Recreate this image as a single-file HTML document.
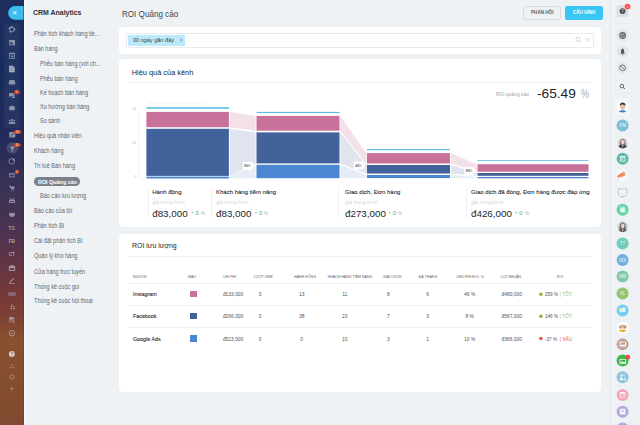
<!DOCTYPE html>
<html><head><meta charset="utf-8">
<style>
*{box-sizing:border-box;margin:0;padding:0}
html,body{width:640px;height:425px;overflow:hidden;background:#eef2f5;font-family:"Liberation Sans",sans-serif;position:relative}
.abs{position:absolute}
.t{position:absolute;white-space:nowrap;line-height:1}
#lsb{left:0;top:0;width:23.5px;height:425px;background:linear-gradient(180deg,#1e2f5f 0%,#172c5e 16.7%,#232b5a 33%,#393256 43.8%,#4b3350 54.4%,#613545 61.4%,#743838 68.5%,#7c3f35 73.6%,#8a502e 80.2%,#7f4a30 100%)}
#lsbline{left:23.5px;top:0;width:1px;height:425px;background:#f5f9fb}
#nav{left:24.5px;top:0;width:88px;height:425px;background:#eef2f5}
.nv{position:absolute;white-space:nowrap;line-height:1;font-size:6.4px;color:#60656f;transform:translateY(-50%) scaleX(0.865);transform-origin:0 50%}
#rsb{left:610px;top:0;width:30px;height:425px;background:#eef2f5;border-left:1px solid #e6e9ed}
.card{position:absolute;background:#fff;border-radius:4.5px}
</style></head><body>
<div id="lsb" class="abs"></div>
<div id="lsbline" class="abs"></div>
<div class="abs" style="left:22.5px;top:0;width:1px;height:425px;background:rgba(0,0,0,0.1)"></div>
<div id="nav" class="abs"></div>
<div id="rsb" class="abs"></div>


<!-- left sidebar icons -->
<svg class="abs" style="left:0;top:0" width="24" height="425">
<path d="M15,6.1 H23.5 V19.7 H15 A6.8,6.8 0 0 1 15,6.1Z" fill="#3dbdf0"/>
<path d="M13.5,11.3 L16.3,14.1 M16.3,11.3 L13.5,14.1" stroke="#fff" stroke-width="1" stroke-linecap="round"/>
<rect x="4.2" y="23.2" width="15.6" height="104.8" rx="2.2" fill="#ffffff" fill-opacity="0.045"/>
<g fill="none" stroke="#c9ccd9" stroke-width="0.9" stroke-opacity="0.6">
 <!-- 1 cycle -->
 <circle cx="12" cy="29.5" r="2.4"/>
 <!-- 4 doc -->
 <path d="M9.5,66 H12.6 L14.3,67.7 V72 H9.5Z" fill="#c9ccd9" fill-opacity="0.7"/>
 <!-- 11 gauge -->
 <circle cx="11.8" cy="161.3" r="2.8"/>
 <!-- circle minus -->
 <circle cx="11.8" cy="333.3" r="2.7" stroke-width="1"/>
 <!-- gear -->
 <circle cx="11.8" cy="377" r="2.2" stroke-opacity="0.5"/>
</g>
<g fill="#c9ccd9" fill-opacity="0.62">
 <circle cx="9.6" cy="28.2" r="0.9"/><circle cx="14.4" cy="29.5" r="0.9"/><circle cx="10.5" cy="31.7" r="0.9"/><circle cx="11.8" cy="27" r="0.9"/>
 <!-- 2 monitor -->
 <path d="M9.2,40 H15 V45.2 H9.2Z M10,42.4 V44.2 H12.6 V42.4Z" fill-rule="evenodd"/>
 <!-- 3 calendar -->
 <path d="M9.1,52.7 H14.9 V58.8 H9.1Z M9.9,54.3 V58 H14.1 V54.3Z" fill-rule="evenodd"/>
 <rect x="11.2" y="55.4" width="2.2" height="1.8"/>
 <!-- 5 tray -->
 <path d="M9.6,80 H14.4 L15.2,82.3 V84.6 H8.8 V82.3Z"/>
 <!-- 6 chat -->
 <path d="M9,93 H13.6 V96.3 H10.6 L9.6,97.4 V96.3 H9Z"/>
 <path d="M14.2,94.6 V97.5 H11.8" fill="none" stroke="#c9ccd9" stroke-width="0.7"/>
 <!-- 7 mail -->
 <path d="M9.2,106.8 L12,105.4 L14.8,106.8 V110.3 H9.2Z"/>
 <!-- 8 people -->
 <circle cx="12" cy="120" r="1.1"/><circle cx="9.6" cy="120.6" r="0.9"/><circle cx="14.4" cy="120.6" r="0.9"/>
 <path d="M8.2,124 Q9.5,121.5 12,121.6 Q14.5,121.5 15.8,124Z"/>
 <!-- 9 check square -->
 <rect x="9.2" y="132" width="6" height="5.6" rx="0.6"/>
 <path d="M10.6,136.4 L13.8,133.2" stroke="#2a3166" stroke-width="0.8"/>
</g>
<!-- funnel highlight -->
<circle cx="12.3" cy="147.9" r="5.7" fill="#ffffff" fill-opacity="0.15"/>
<g fill="#c9ccd9" fill-opacity="0.62">
 <path d="M9.6,146.4 H15 L13,149 V151.4 H11.6 V149Z"/>
 <path d="M12.5,159.8 L14.6,158.4 L13.6,161" fill-opacity="0.8"/>
 <!-- card -->
 <path d="M9,173.2 H14.6 V177.2 H9Z M9.8,174.5 V176.4 H13.8 V174.5Z" fill-rule="evenodd"/>
 <!-- cart -->
 <path d="M9,185.4 H10.4 L10.9,186.4 H14.8 L14,189.3 H11.2Z"/>
 <circle cx="11.4" cy="190.6" r="0.6"/><circle cx="13.6" cy="190.6" r="0.6"/>
 <!-- android -->
 <path d="M9,201 Q9,199.2 12,199.2 Q15,199.2 15,201 V203 H9Z M10,201.2 V202.2 H14 V201.2Z" fill-rule="evenodd"/>
 <path d="M10,198 L10.8,199.4 M14,198 L13.2,199.4" stroke="#c9ccd9" stroke-width="0.6"/>
 <!-- mask -->
 <path d="M9.2,212.6 L10.6,213.6 L12,212.6 L13.4,213.6 L14.8,212.6 V215.2 Q14.5,217 12,217 Q9.5,217 9.2,215.2Z"/>
 <!-- bank -->
 <path d="M8.8,266.3 L12,265 L15.2,266.3 V271 H8.8Z M9.8,268.2 V270 H14.2 V268.2Z" fill-rule="evenodd"/>
 <!-- pen -->
 <path d="M9.2,283 H14.8 V283.8 H9.2Z"/>
 <path d="M9.4,282.6 L13.8,278.4" stroke="#c9ccd9" stroke-width="0.9"/>
 <!-- Js -->
 <path d="M12.2,304.2 V308.4 Q12.2,309.2 11,309.2 H9.8 V308.4 H11.2 V304.2Z"/>
 <path d="M13,308 H15 V309.2 H13Z M13,306 H14.6 V307 H13Z"/>
 <!-- flag/pdf -->
 <path d="M9.4,317 H13 L14.2,318.2 V319.6 H10.6 V322.6 H9.4Z"/>
 <path d="M11.6,320.4 L14.4,322.8 M14.4,320.4 L12.8,321.6" stroke="#c9ccd9" stroke-width="0.7"/>
 <!-- minus inside circle -->
 <path d="M10.6,333 H13 L11.8,334.2Z"/>
 <!-- divider -->
 <rect x="9" y="344" width="6" height="0.5" fill-opacity="0.15"/>
 <!-- question -->
 <circle cx="11.8" cy="354" r="2.9" fill="#d8dce4" fill-opacity="0.9"/>
 <!-- network -->
 <circle cx="11.8" cy="365.3" r="0.7" fill-opacity="0.55"/><circle cx="10.4" cy="367.5" r="0.7" fill-opacity="0.55"/><circle cx="13.2" cy="367.5" r="0.7" fill-opacity="0.55"/>
 <!-- plus -->
 <path d="M11.4,386.6 H12.2 V388.2 H13.8 V389 H12.2 V390.6 H11.4 V389 H9.8 V388.2 H11.4Z" fill-opacity="0.5"/>
</g>
<path d="M11.1,353 Q11.1,352.3 11.9,352.3 Q12.7,352.3 12.7,353 Q12.7,353.6 11.9,353.9 V354.6 M11.9,355.2 V355.7" stroke="#8a502e" stroke-width="0.6" fill="none"/>
<g fill="#c9461f">
 <ellipse cx="16.8" cy="92.2" rx="3" ry="2.1"/>
 <ellipse cx="17.45" cy="132" rx="4" ry="2.1"/>
 <ellipse cx="17.1" cy="145.1" rx="3.7" ry="2.1"/>
 <ellipse cx="17" cy="172" rx="2.4" ry="2"/>
</g>
<g fill="#fff" font-family="Liberation Sans" font-size="2.6" text-anchor="middle">
 <text x="16.8" y="93.1">5</text>
 <text x="17.45" y="132.9">23</text>
 <text x="17.1" y="146">16</text>
 <text x="17" y="172.9">2</text>
</g>
<g fill="#c9ccd9" fill-opacity="0.72" font-family="Liberation Sans" font-size="5.2" font-weight="700" text-anchor="middle">
 <text x="11.8" y="230" textLength="6.4" lengthAdjust="spacingAndGlyphs">TG</text>
 <text x="11.8" y="243.2" textLength="6.2" lengthAdjust="spacingAndGlyphs">FB</text>
 <text x="11.8" y="256.4" textLength="6.2" lengthAdjust="spacingAndGlyphs">CT</text>
 <text x="12" y="295.6" font-size="4.6" font-weight="400" fill-opacity="0.75" textLength="7.4" lengthAdjust="spacingAndGlyphs">MM</text>
</g>
</svg>

<!-- right sidebar -->
<svg class="abs" style="left:0;top:0" width="640" height="425">
<rect x="616.6" y="5.2" width="11.7" height="11.7" rx="1.8" fill="#dcdfe4"/>
<circle cx="622.6" cy="11.1" r="2.9" fill="#4a4f5a"/>
<path d="M621.8,10.2 Q621.8,9.3 622.6,9.3 Q623.4,9.3 623.4,10.1 Q623.4,10.7 622.6,11 V11.8 M622.6,12.4 V12.9" stroke="#dfe2e7" stroke-width="0.55" fill="none"/>
<circle cx="627.5" cy="6.6" r="3.2" fill="#f04848" stroke="#fff" stroke-width="0.6"/>
<text x="627.5" y="7.6" font-family="Liberation Sans" font-size="2.8" fill="#fff" text-anchor="middle">6</text>
<rect x="615" y="23" width="15" height="0.5" fill="#e2e5e9"/>
<rect x="615" y="79.7" width="15" height="0.5" fill="#e2e5e9"/>
<rect x="615" y="93" width="15" height="0.5" fill="#e2e5e9"/>
<circle cx="622.6" cy="35.5" r="5.9" fill="#e3e6ea"/>
<circle cx="622.6" cy="51.3" r="5.9" fill="#e3e6ea"/>
<circle cx="622.6" cy="67.8" r="5.9" fill="#e3e6ea"/>
<circle cx="622.6" cy="35.5" r="3.4" fill="#666b75"/>
<circle cx="622.9" cy="35.8" r="1.5" fill="none" stroke="#b9bdc4" stroke-width="0.6"/>
<path d="M619.6,34.6 Q621.5,33.4 623.8,34.2 M621,38.2 Q620.2,36.4 621.4,35" stroke="#b9bdc4" stroke-width="0.5" fill="none"/>
<path d="M620.4,53.4 Q621.2,52.6 621.2,50.6 Q621.2,48.6 622.6,48.4 Q624,48.6 624,50.6 Q624,52.6 624.8,53.4Z" fill="#4d525c"/>
<circle cx="622.6" cy="54.2" r="0.7" fill="#4d525c"/>
<circle cx="622.6" cy="67.8" r="2.9" fill="none" stroke="#5a5f6a" stroke-width="0.8"/>
<path d="M620.6,65.8 L624.6,69.8" stroke="#5a5f6a" stroke-width="0.8"/>
<circle cx="621.9" cy="86.1" r="1.8" fill="none" stroke="#3f444d" stroke-width="0.8"/>
<path d="M623.2,87.4 L624.8,89" stroke="#3f444d" stroke-width="0.9"/>
<rect x="615" y="98.5" width="15" height="17" rx="2" fill="#f3f5f7"/>
<circle cx="622.6" cy="106.7" r="5.6" fill="#fff"/>
<path d="M618.8,111.5 Q622.6,108.8 626.4,111.5 Q622.6,113.4 618.8,111.5Z" fill="#3a82c4"/>
<ellipse cx="622.6" cy="107" rx="2.4" ry="3" fill="#e8c0a8"/>
<path d="M619.8,106 Q619.6,102.6 622.8,102.6 Q625.8,102.8 625.6,106 Q624.6,104.2 622.2,104.4 Q620.6,104.8 619.8,106Z" fill="#3a3a3a"/>
<circle cx="622.6" cy="125.4" r="6" fill="#7cbfd6"/>
<text x="622.6" y="127.0" font-family="Liberation Sans" font-size="4.6" fill="#fff" fill-opacity="0.9" text-anchor="middle">PM</text>
<circle cx="622.6" cy="158.8" r="6" fill="#5bbcac"/>
<circle cx="622.6" cy="209.7" r="6" fill="#62d6a2"/>
<circle cx="622.6" cy="243.5" r="6" fill="#72cdb8"/>
<text x="622.6" y="245.1" font-family="Liberation Sans" font-size="4.6" fill="#fff" fill-opacity="0.9" text-anchor="middle">TT</text>
<circle cx="622.6" cy="260.1" r="6" fill="#70b2dd"/>
<text x="622.6" y="261.70000000000005" font-family="Liberation Sans" font-size="4.6" fill="#fff" fill-opacity="0.9" text-anchor="middle">MX</text>
<circle cx="622.6" cy="276.5" r="6" fill="#80c8a8"/>
<text x="622.6" y="278.1" font-family="Liberation Sans" font-size="4.6" fill="#fff" fill-opacity="0.9" text-anchor="middle">MB</text>
<circle cx="622.6" cy="293.4" r="6" fill="#95c56e"/>
<text x="622.6" y="295.0" font-family="Liberation Sans" font-size="4.6" fill="#fff" fill-opacity="0.9" text-anchor="middle">XL</text>
<circle cx="622.6" cy="310.4" r="6" fill="#72cff2"/>
<circle cx="622.6" cy="344.3" r="6" fill="#c4a698"/>
<circle cx="622.6" cy="360.6" r="6" fill="#3dba47"/>
<circle cx="622.6" cy="377.2" r="6" fill="#8ec3dc"/>
<circle cx="622.6" cy="394.9" r="6" fill="#f2a5b9"/>
<circle cx="622.6" cy="411.7" r="6" fill="#b3a7e0"/>
<circle cx="622.6" cy="428.5" r="6" fill="#b3a7e0"/>
<rect x="619.8" y="156" width="5.6" height="5.4" rx="0.5" fill="#fff" fill-opacity="0.85"/><rect x="620.6" y="157.6" width="4" height="3" fill="#5bbcac"/><rect x="621.4" y="158.4" width="1.6" height="1.4" fill="#fff" fill-opacity="0.8"/>
<rect x="620.2" y="206.8" width="4.4" height="5.6" fill="#fff" fill-opacity="0.85"/><rect x="624.6" y="208" width="0.9" height="4.4" fill="#fff" fill-opacity="0.7"/><circle cx="621.2" cy="207.8" r="0.5" fill="#5aa8e0"/><circle cx="622.6" cy="207.8" r="0.5" fill="#5aa8e0"/>
<path d="M619.4,307.8 H625.4 V311.8 H621.4 L620.2,313 V311.8 H619.4Z" fill="#fff" fill-opacity="0.85"/><rect x="620" y="308.4" width="2.4" height="1.4" fill="#c8e070"/>
<rect x="619.6" y="341.7" width="6.4" height="4.8" rx="0.6" fill="#fff" fill-opacity="0.9"/><rect x="620.6" y="342.6" width="1.2" height="2.4" fill="#a88a7e"/><rect x="622.4" y="342.6" width="2.6" height="2" fill="#a88a7e"/>
<rect x="619.6" y="358.9" width="6.4" height="4.8" rx="0.6" fill="#fff" fill-opacity="0.9"/><rect x="620.6" y="359.8" width="1.2" height="2.4" fill="#2f9a3a"/><rect x="622.4" y="359.8" width="2.6" height="2" fill="#2f9a3a"/>
<circle cx="627.8" cy="357.2" r="2.4" fill="#ee4a4a"/>
<path d="M619.4,380.2 Q619.6,377.6 621.4,377.4 Q623.2,377.6 623.4,380.2Z M620.4,375.6 a1,1.3 0 1 0 2,0 a1,1.3 0 1 0 -2,0" fill="#fff" fill-opacity="0.9"/><path d="M623.8,380.2 H625.8 Q625.6,377.8 624.2,377.4 M624,373.8 V376.2" stroke="#fff" stroke-width="0.8" fill="none"/>
<rect x="619.8" y="392" width="5.6" height="5.6" rx="0.6" fill="#fff" fill-opacity="0.85"/><rect x="620.6" y="393.8" width="4" height="3" fill="#f2a5b9"/><rect x="621.2" y="394.6" width="2.8" height="0.6" fill="#fff" fill-opacity="0.8"/>
<rect x="619.8" y="408.8" width="5.6" height="5.6" rx="0.6" fill="#fff" fill-opacity="0.85"/><path d="M621.2,410.4 H624 L622.6,412.4Z" fill="#b3a7e0"/>
<circle cx="622.7" cy="142.9" r="6.2" fill="#f7f8fa"/>
<clipPath id="av142"><circle cx="622.7" cy="142.9" r="5.5"/></clipPath>
<g clip-path="url(#av142)">
<rect x="616.7" y="136.9" width="12" height="12" fill="#dcdee2"/>
<path d="M619.5,145.9 Q619.3000000000001,138.70000000000002 622.7,138.70000000000002 Q626.1,138.70000000000002 625.7,145.9Z" fill="#8c746a"/>
<ellipse cx="622.8000000000001" cy="142.1" rx="1.8" ry="2.4" fill="#ead3ca"/>
<path d="M616.7,148.9 Q617.7,144.9 622.7,145.1 Q627.7,144.9 628.7,148.9Z" fill="#3f434b"/>
<path d="M622.1,144.9 L623.3000000000001,144.9 L622.9000000000001,148.4 Z" fill="#e8d2c8"/>
</g>
<circle cx="622.7" cy="226.7" r="6.2" fill="#f7f8fa"/>
<clipPath id="av226"><circle cx="622.7" cy="226.7" r="5.5"/></clipPath>
<g clip-path="url(#av226)">
<rect x="616.7" y="220.7" width="12" height="12" fill="#cdd1d8"/>
<path d="M619.5,229.7 Q619.3000000000001,222.5 622.7,222.5 Q626.1,222.5 625.7,229.7Z" fill="#6e5e58"/>
<ellipse cx="622.8000000000001" cy="225.89999999999998" rx="1.8" ry="2.4" fill="#ead3ca"/>
<path d="M616.7,232.7 Q617.7,228.7 622.7,228.89999999999998 Q627.7,228.7 628.7,232.7Z" fill="#5d6473"/>
<path d="M622.1,228.7 L623.3000000000001,228.7 L622.9000000000001,232.2 Z" fill="#e8d2c8"/>
</g>
<circle cx="622.6" cy="175.8" r="6" fill="#fafafa"/>
<path d="M617.2,176.8 Q617,175.6 618.2,175 L623.4,171.6 L624.8,176 L618.6,177.6 Q617.6,177.8 617.2,176.8Z" fill="#f08a5a"/><ellipse cx="624.2" cy="173.8" rx="1.2" ry="2.4" fill="#e7b486" transform="rotate(-18 624.2 173.8)"/><circle cx="618.6" cy="178.6" r="0.6" fill="#f5c0a8"/>
<circle cx="622.6" cy="192.7" r="6" fill="#f4f6f8"/>
<path d="M618.2,192.8 Q618.2,189.6 619,188.4 L620.6,189.2 Q622.6,188.6 624.6,189.2 L626.2,188.4 Q627,189.6 627,192.8 Q627,196.6 622.6,196.8 Q618.2,196.6 618.2,192.8Z" fill="none" stroke="#8f949c" stroke-width="0.55"/><path d="M620.4,192.6 L621.4,193.4 M624.8,192.6 L623.8,193.4 M622,194.6 H623.2" stroke="#8f949c" stroke-width="0.45"/><path d="M621.8,197.2 L622.6,198 L623.4,197.2" stroke="#8f949c" stroke-width="0.4" fill="none"/>
<circle cx="622.6" cy="327.9" r="6" fill="#fff"/>
<path d="M618.4,330.4 Q622.6,328.6 626.8,330.4 Q622.6,334 618.4,330.4Z" fill="#e2b83a"/>
<circle cx="620.4" cy="327" r="1.7" fill="#caa080"/><circle cx="624.8" cy="327" r="1.7" fill="#b08a70"/><circle cx="622.6" cy="326.4" r="2" fill="#d8b090"/>
</svg>

<!-- nav -->
<div class="t" style="left:33.3px;top:12.9px;font-size:8px;font-weight:700;color:#2e3035;transform:translateY(-50%) scaleX(0.87);transform-origin:0 50%">CRM Analytics</div>
<div class="nv" style="left:34px;top:33.7px">Phân tích khách hàng tiề...</div>
<div class="nv" style="left:34px;top:49.2px">Bán hàng</div>
<div class="nv" style="left:40px;top:64.1px">Phễu bán hàng (với ch...</div>
<div class="nv" style="left:40px;top:78.8px">Phễu bán hàng</div>
<div class="nv" style="left:40px;top:93.1px">Kế hoạch bán hàng</div>
<div class="nv" style="left:40px;top:107.1px">Xu hướng bán hàng</div>
<div class="nv" style="left:40px;top:121.4px">So sánh</div>
<div class="nv" style="left:34px;top:135.9px">Hiệu quả nhân viên</div>
<div class="nv" style="left:34px;top:151.3px">Khách hàng</div>
<div class="nv" style="left:34px;top:166.4px">Trí tuệ Bán hàng</div>
<div class="abs" style="left:33.8px;top:177.1px;width:46.3px;height:9.2px;border-radius:5px;background:#7b808b"></div>
<div class="nv" style="left:38.1px;top:181.8px;color:#fff;font-weight:700;font-size:6px;transform:translateY(-50%) scaleX(0.9)">ROI Quảng cáo</div>
<div class="nv" style="left:40px;top:196.1px">Báo cáo lưu lượng</div>
<div class="nv" style="left:34px;top:210.6px">Báo cáo của tôi</div>
<div class="nv" style="left:34px;top:225.6px">Phân tích BI</div>
<div class="nv" style="left:34px;top:240.9px">Cài đặt phân tích BI</div>
<div class="nv" style="left:34px;top:256.4px">Quản lý kho hàng</div>
<div class="nv" style="left:34px;top:271.9px">Cửa hàng trực tuyến</div>
<div class="nv" style="left:34px;top:287px">Thống kê cuộc gọi</div>
<div class="nv" style="left:34px;top:301.4px">Thống kê cuộc hội thoại</div>

<!-- header -->
<div class="t" style="left:121.7px;top:14.25px;font-size:8.4px;color:#3d4047;transform:translateY(-50%) scaleX(0.965);transform-origin:0 50%">ROI Quảng cáo</div>

<!-- filter card -->
<div class="card" style="left:119px;top:27px;width:482px;height:27px"></div>

<!-- chart card -->
<div class="card" style="left:119px;top:59.4px;width:481.8px;height:167.6px"></div>


<!-- header buttons -->
<div class="abs" style="left:523.2px;top:5.9px;width:37.4px;height:14.4px;border:1px solid #d9dce1;border-radius:2px;background:#eef2f5"></div>
<div class="t" style="left:531px;top:13.4px;font-size:4.6px;font-weight:700;color:#5a5e66;transform:translateY(-50%)">PHẢN HỒI</div>
<div class="abs" style="left:565px;top:5.9px;width:37.9px;height:14.6px;border-radius:2px;background:#3ac6f4"></div>
<div class="t" style="left:572.9px;top:13.4px;font-size:4.6px;font-weight:700;color:#fff;transform:translateY(-50%)">CẤU HÌNH</div>

<!-- filter content -->
<div class="abs" style="left:125.6px;top:33.2px;width:468.5px;height:14.5px;border:1px solid #e8eaee;border-radius:2px"></div>
<div class="abs" style="left:128px;top:35px;width:57px;height:11px;background:#bceafa"></div>
<div class="t" style="left:132.7px;top:40.6px;font-size:5.6px;color:#3a3f47;transform:translateY(-50%)">30 ngày gần đây</div>
<div class="t" style="left:179.8px;top:40.6px;font-size:5.5px;color:#7d8c95;transform:translateY(-50%)">×</div>
<svg class="abs" style="left:0;top:0" width="640" height="425">
<circle cx="577.9" cy="39.3" r="1.9" fill="none" stroke="#c4c7cc" stroke-width="0.8"/>
<line x1="579.3" y1="40.7" x2="580.6" y2="42" stroke="#c4c7cc" stroke-width="0.9"/>
<line x1="585.6" y1="38" x2="589.2" y2="41.6" stroke="#c4c7cc" stroke-width="0.7"/>
<line x1="589.2" y1="38" x2="585.6" y2="41.6" stroke="#c4c7cc" stroke-width="0.7"/>
</svg>

<!-- chart card content -->
<div class="t" style="left:131.7px;top:72.5px;font-size:7.4px;color:#202328;transform:translateY(-50%)">Hiệu quả của kênh</div>
<div class="abs" style="left:128px;top:82px;width:464px;height:0.6px;background:#eef0f3"></div>
<div class="t" style="left:496px;top:94.8px;font-size:4.9px;color:#9a9ea5;transform:translateY(-50%)">ROI quảng cáo</div>
<div class="t" style="left:537.2px;top:93.9px;font-size:13.1px;color:#1f2226;transform:translateY(-50%) scaleX(1.045);transform-origin:0 50%">-65.49</div>
<div class="t" style="left:580.7px;top:93.9px;font-size:12.6px;color:#a9adb3;transform:translateY(-50%) scaleX(0.72);transform-origin:0 50%">%</div>

<svg class="abs" style="left:0;top:0" width="640" height="425">
<line x1="138.7" y1="107" x2="138.7" y2="178.5" stroke="#eceef1" stroke-width="0.6"/>
<line x1="138.7" y1="178.5" x2="145" y2="178.5" stroke="#eceef1" stroke-width="0.6"/>
<line x1="147" y1="102.8" x2="204" y2="102.8" stroke="#d4d7dc" stroke-width="0.7" stroke-dasharray="0.8 1.2"/>
<polygon points="229.8,111.9 255.6,115.9 255.6,130.7 229.8,127.2" fill="#f4e0e8"/>
<polygon points="229.8,128.8 255.6,132.4 255.6,163.4 229.8,175.9" fill="#dfe4ee"/>
<polygon points="229.8,176.6 255.6,164.8 255.6,178.2 229.8,178.5" fill="#e6edf7"/>
<polygon points="340.4,115.9 366.0,153.1 366.0,163.5 340.4,130.7" fill="#f4e0e8"/>
<polygon points="340.4,132.4 366.0,165.0 366.0,173.5 340.4,163.4" fill="#dfe4ee"/>
<polygon points="340.4,164.8 366.0,175.0 366.0,178.1 340.4,178.2" fill="#e6edf7"/>
<polygon points="450.9,153.1 476.6,164.25 476.6,171.75 450.9,163.5" fill="#f4e0e8"/>
<polygon points="450.9,165.0 476.6,173.0 476.6,175.8 450.9,173.5" fill="#dfe4ee"/>
<polygon points="450.9,175.0 476.6,177.0 476.6,178.3 450.9,178.1" fill="#e6edf7"/>
<rect x="146.4" y="107.2" width="82.5" height="1.6" fill="#5bbde3"/>
<rect x="146.4" y="111.9" width="82.5" height="15.3" fill="#c8719a"/>
<rect x="146.4" y="128.8" width="82.5" height="47.1" fill="#41629b"/>
<rect x="146.4" y="176.6" width="82.5" height="1.9" fill="#4b86d3"/>
<rect x="256.5" y="111.9" width="83.0" height="1.2" fill="#5bbde3"/>
<rect x="256.5" y="115.9" width="83.0" height="14.8" fill="#c8719a"/>
<rect x="256.5" y="132.4" width="83.0" height="31.0" fill="#41629b"/>
<rect x="256.5" y="164.8" width="83.0" height="13.4" fill="#4b86d3"/>
<rect x="366.9" y="149.0" width="83.1" height="1.2" fill="#5bbde3"/>
<rect x="366.9" y="153.1" width="83.1" height="10.4" fill="#c8719a"/>
<rect x="366.9" y="165.0" width="83.1" height="8.5" fill="#41629b"/>
<rect x="366.9" y="175.0" width="83.1" height="3.1" fill="#4b86d3"/>
<rect x="477.5" y="160.1" width="111.0" height="0.8" fill="#5bbde3"/>
<rect x="477.5" y="164.25" width="111.0" height="7.5" fill="#c8719a"/>
<rect x="477.5" y="173.0" width="111.0" height="2.8" fill="#41629b"/>
<rect x="477.5" y="177.0" width="111.0" height="1.3" fill="#4b86d3"/>
<path d="M243.6,162.1 H252 L254.1,166 L252,169.9 H243.6 Q242.6,169.9 242.6,168.9 V163.1 Q242.6,162.1 243.6,162.1Z" fill="#fff"/>
<path d="M354.6,161.6 H363 L365.1,165.5 L363,169.4 H354.6 Q353.6,169.4 353.6,168.4 V162.6 Q353.6,161.6 354.6,161.6Z" fill="#fff"/>
<path d="M465.1,167.2 H473.5 L475.6,171.1 L473.5,175 H465.1 Q464.1,175 464.1,174 V168.2 Q464.1,167.2 465.1,167.2Z" fill="#fff"/>
</svg>
<div class="t" style="left:244.3px;top:167.2px;font-size:3.8px;font-weight:700;color:#666;transform:translateY(-50%)">80<span style="font-size:2.6px;font-weight:400">%</span></div>
<div class="t" style="left:355.3px;top:166.7px;font-size:3.8px;font-weight:700;color:#666;transform:translateY(-50%)">40<span style="font-size:2.6px;font-weight:400">%</span></div>
<div class="t" style="left:465.8px;top:172.3px;font-size:3.8px;font-weight:700;color:#666;transform:translateY(-50%)">89<span style="font-size:2.6px;font-weight:400">%</span></div>
<div class="t" style="left:132.2px;top:110px;font-size:3.8px;color:#b5b8bd;transform:translateY(-50%)">51</div>
<div class="t" style="left:132.2px;top:143.8px;font-size:3.8px;color:#b5b8bd;transform:translateY(-50%)">25</div>
<div class="t" style="left:134.2px;top:178px;font-size:3.8px;color:#b5b8bd;transform:translateY(-50%)">0</div>

<!-- metrics -->
<div class="abs" style="left:147.5px;top:188.4px;width:0.6px;height:28.2px;background:#f0f1f3"></div>
<div class="abs" style="left:210.9px;top:188.4px;width:0.6px;height:28.2px;background:#f0f1f3"></div>
<div class="abs" style="left:337.5px;top:188.4px;width:0.6px;height:28.2px;background:#f0f1f3"></div>
<div class="abs" style="left:465.9px;top:188.4px;width:0.6px;height:28.2px;background:#f0f1f3"></div>
<div class="t" style="left:152.2px;top:192.25px;font-size:6px;color:#2d3036;-webkit-text-stroke:0.1px #2d3036;transform:translateY(-50%)">Hành động</div>
<div class="t" style="left:152.2px;top:202.6px;font-size:5.3px;color:#d3d6db;transform:translateY(-50%)">giá trung bình</div>
<div class="t mv" style="left:152.2px;top:213.8px;font-size:9.8px;color:#23262b;transform:translateY(-50%)">đ83,000</div>
<div class="t" style="left:216px;top:192.25px;font-size:6px;color:#2d3036;-webkit-text-stroke:0.1px #2d3036;transform:translateY(-50%)">Khách hàng tiềm năng</div>
<div class="t" style="left:216px;top:202.6px;font-size:5.3px;color:#d3d6db;transform:translateY(-50%)">giá trung bình</div>
<div class="t mv" style="left:216px;top:213.8px;font-size:9.8px;color:#23262b;transform:translateY(-50%)">đ83,000</div>
<div class="t" style="left:345px;top:192.25px;font-size:6px;color:#2d3036;-webkit-text-stroke:0.1px #2d3036;transform:translateY(-50%)">Giao dịch, Đơn hàng</div>
<div class="t" style="left:345px;top:202.6px;font-size:5.3px;color:#d3d6db;transform:translateY(-50%)">giá trung bình</div>
<div class="t mv" style="left:345px;top:213.8px;font-size:9.8px;color:#23262b;transform:translateY(-50%)">đ273,000</div>
<div class="t" style="left:471px;top:192.25px;font-size:6px;color:#2d3036;-webkit-text-stroke:0.1px #2d3036;transform:translateY(-50%)">Giao dịch đã đóng, Đơn hàng được đáp ứng</div>
<div class="t" style="left:471px;top:202.6px;font-size:5.3px;color:#d3d6db;transform:translateY(-50%)">giá trung bình</div>
<div class="t mv" style="left:471px;top:213.8px;font-size:9.8px;color:#23262b;transform:translateY(-50%)">đ426,000</div>

<!-- table card -->
<div class="card" style="left:119px;top:233.7px;width:481.8px;height:158.2px"></div>


<!-- +0% -->
<svg class="abs" style="left:0;top:0" width="640" height="425"><path d="M191.40,212.6 H193.20 M192.30,211.7 V213.5" stroke="#6ab56a" stroke-width="0.6"/></svg><div class="t" style="left:195.40px;top:213.1px;font-size:6.2px;color:#62ad62;transform:translateY(-50%)">0</div><div class="t" style="left:200.60px;top:213.7px;font-size:5.4px;color:#b3adad;transform:translateY(-50%) scaleX(0.85);transform-origin:0 50%">%</div>
<svg class="abs" style="left:0;top:0" width="640" height="425"><path d="M255.10,212.6 H256.90 M256.00,211.7 V213.5" stroke="#6ab56a" stroke-width="0.6"/></svg><div class="t" style="left:259.10px;top:213.1px;font-size:6.2px;color:#62ad62;transform:translateY(-50%)">0</div><div class="t" style="left:264.30px;top:213.7px;font-size:5.4px;color:#b3adad;transform:translateY(-50%) scaleX(0.85);transform-origin:0 50%">%</div>
<svg class="abs" style="left:0;top:0" width="640" height="425"><path d="M388.80,212.6 H390.60 M389.70,211.7 V213.5" stroke="#6ab56a" stroke-width="0.6"/></svg><div class="t" style="left:392.80px;top:213.1px;font-size:6.2px;color:#62ad62;transform:translateY(-50%)">0</div><div class="t" style="left:398.00px;top:213.7px;font-size:5.4px;color:#b3adad;transform:translateY(-50%) scaleX(0.85);transform-origin:0 50%">%</div>
<svg class="abs" style="left:0;top:0" width="640" height="425"><path d="M515.30,212.6 H517.10 M516.20,211.7 V213.5" stroke="#6ab56a" stroke-width="0.6"/></svg><div class="t" style="left:519.30px;top:213.1px;font-size:6.2px;color:#62ad62;transform:translateY(-50%)">0</div><div class="t" style="left:524.50px;top:213.7px;font-size:5.4px;color:#b3adad;transform:translateY(-50%) scaleX(0.85);transform-origin:0 50%">%</div>

<!-- table content -->
<div class="t" style="left:131.8px;top:246.2px;font-size:7.8px;color:#202328;transform:translateY(-50%) scaleX(0.89);transform-origin:0 50%">ROI lưu lượng</div>
<div class="abs" style="left:128px;top:256.3px;width:464px;height:0.6px;background:#eef0f3"></div>
<div class="abs" style="left:127.8px;top:283.2px;width:464px;height:0.6px;background:#eef0f3"></div>
<div class="abs" style="left:127.8px;top:304.8px;width:464px;height:0.6px;background:#eef0f3"></div>
<div class="abs" style="left:127.8px;top:326.8px;width:464px;height:0.6px;background:#eef0f3"></div>
<div class="t" style="left:132.9px;top:277px;font-size:3.9px;color:#5d6168;transform:translateY(-50%) scaleX(0.92);transform-origin:0 50%">NGUỒN</div>
<div class="t" style="left:188px;top:277px;font-size:3.9px;color:#5d6168;transform:translateY(-50%) scaleX(0.92);transform-origin:0 50%">MÀU</div>
<div class="t" style="left:222.6px;top:277px;font-size:3.9px;color:#5d6168;transform:translateY(-50%) scaleX(0.92);transform-origin:0 50%">CHI PHÍ</div>
<div class="t" style="left:262.8px;top:277px;font-size:3.9px;color:#5d6168;transform:translate(-50%,-50%) scaleX(0.92)">LƯỢT XEM</div>
<div class="t" style="left:304.8px;top:277px;font-size:3.9px;color:#5d6168;transform:translate(-50%,-50%) scaleX(0.92)">HÀNH ĐỘNG</div>
<div class="t" style="left:350.3px;top:277px;font-size:3.9px;color:#5d6168;transform:translate(-50%,-50%) scaleX(0.92)">KHÁCH HÀNG TIỀM NĂNG</div>
<div class="t" style="left:391.7px;top:277px;font-size:3.9px;color:#5d6168;transform:translate(-50%,-50%) scaleX(0.92)">GIAO DỊCH</div>
<div class="t" style="left:427.6px;top:277px;font-size:3.9px;color:#5d6168;transform:translate(-50%,-50%) scaleX(0.92)">ĐÃ THẮNG</div>
<div class="t" style="left:469.5px;top:277px;font-size:3.9px;color:#5d6168;transform:translate(-50%,-50%) scaleX(0.92)">CHUYỂN ĐỔI, %</div>
<div class="t" style="left:510.8px;top:277px;font-size:3.9px;color:#5d6168;transform:translate(-50%,-50%) scaleX(0.92)">LỢI NHUẬN</div>
<div class="t" style="left:559.8px;top:277px;font-size:3.9px;color:#5d6168;transform:translate(-50%,-50%) scaleX(0.92)">ROI</div>
<div class="t" style="left:132.9px;top:295.3px;font-size:5.4px;color:#2d3036;-webkit-text-stroke:0.1px #2d3036;transform:translateY(-50%)">Instagram</div>
<div class="abs" style="left:189.5px;top:290.8px;width:7px;height:6.6px;background:#c8719a"></div>
<div class="t" style="left:222.9px;top:295.3px;font-size:4.9px;color:#4f535b;transform:translateY(-50%)">đ133,000</div>
<div class="t" style="left:260px;top:295.3px;font-size:4.9px;color:#4f535b;transform:translate(-50%,-50%)">0</div>
<div class="t" style="left:301.7px;top:295.3px;font-size:4.9px;color:#4f535b;transform:translate(-50%,-50%)">13</div>
<div class="t" style="left:344.7px;top:295.3px;font-size:4.9px;color:#4f535b;transform:translate(-50%,-50%)">11</div>
<div class="t" style="left:388.3px;top:295.3px;font-size:4.9px;color:#4f535b;transform:translate(-50%,-50%)">8</div>
<div class="t" style="left:427.6px;top:295.3px;font-size:4.9px;color:#4f535b;transform:translate(-50%,-50%)">6</div>
<div class="t" style="left:469.7px;top:295.3px;font-size:4.9px;color:#4f535b;transform:translate(-50%,-50%)">46 %</div>
<div class="t" style="left:511.7px;top:295.3px;font-size:4.9px;color:#4f535b;transform:translate(-50%,-50%)">đ480,000</div>
<svg class="abs" style="left:0;top:0" width="640" height="425"><circle cx="540.9" cy="294.25" r="1.75" fill="#8db33a"/></svg>
<div class="t" style="left:545px;top:295.3px;font-size:4.6px;color:#4f535b;transform:translateY(-50%)">259 %</div>
<div class="t" style="left:559.8px;top:295.3px;font-size:4.8px;color:#a3c262;transform:translateY(-50%)">| TỐT</div>
<div class="t" style="left:132.9px;top:317.4px;font-size:5.4px;color:#2d3036;-webkit-text-stroke:0.1px #2d3036;transform:translateY(-50%)">Facebook</div>
<div class="abs" style="left:189.5px;top:312.9px;width:7px;height:6.6px;background:#41629b"></div>
<div class="t" style="left:222.9px;top:317.4px;font-size:4.9px;color:#4f535b;transform:translateY(-50%)">đ266,000</div>
<div class="t" style="left:260px;top:317.4px;font-size:4.9px;color:#4f535b;transform:translate(-50%,-50%)">0</div>
<div class="t" style="left:301.7px;top:317.4px;font-size:4.9px;color:#4f535b;transform:translate(-50%,-50%)">38</div>
<div class="t" style="left:344.7px;top:317.4px;font-size:4.9px;color:#4f535b;transform:translate(-50%,-50%)">23</div>
<div class="t" style="left:388.3px;top:317.4px;font-size:4.9px;color:#4f535b;transform:translate(-50%,-50%)">7</div>
<div class="t" style="left:427.6px;top:317.4px;font-size:4.9px;color:#4f535b;transform:translate(-50%,-50%)">3</div>
<div class="t" style="left:469.7px;top:317.4px;font-size:4.9px;color:#4f535b;transform:translate(-50%,-50%)">8 %</div>
<div class="t" style="left:511.7px;top:317.4px;font-size:4.9px;color:#4f535b;transform:translate(-50%,-50%)">đ567,000</div>
<svg class="abs" style="left:0;top:0" width="640" height="425"><circle cx="540.9" cy="316.35" r="1.75" fill="#8db33a"/></svg>
<div class="t" style="left:545px;top:317.4px;font-size:4.6px;color:#4f535b;transform:translateY(-50%)">146 %</div>
<div class="t" style="left:559.8px;top:317.4px;font-size:4.8px;color:#a3c262;transform:translateY(-50%)">| TỐT</div>
<div class="t" style="left:132.9px;top:339.5px;font-size:5.4px;color:#2d3036;-webkit-text-stroke:0.1px #2d3036;transform:translateY(-50%)">Google Ads</div>
<div class="abs" style="left:189.5px;top:335.0px;width:7px;height:6.6px;background:#4b86d3"></div>
<div class="t" style="left:222.9px;top:339.5px;font-size:4.9px;color:#4f535b;transform:translateY(-50%)">đ523,000</div>
<div class="t" style="left:260px;top:339.5px;font-size:4.9px;color:#4f535b;transform:translate(-50%,-50%)">0</div>
<div class="t" style="left:301.7px;top:339.5px;font-size:4.9px;color:#4f535b;transform:translate(-50%,-50%)">0</div>
<div class="t" style="left:344.7px;top:339.5px;font-size:4.9px;color:#4f535b;transform:translate(-50%,-50%)">10</div>
<div class="t" style="left:388.3px;top:339.5px;font-size:4.9px;color:#4f535b;transform:translate(-50%,-50%)">3</div>
<div class="t" style="left:427.6px;top:339.5px;font-size:4.9px;color:#4f535b;transform:translate(-50%,-50%)">1</div>
<div class="t" style="left:469.7px;top:339.5px;font-size:4.9px;color:#4f535b;transform:translate(-50%,-50%)">10 %</div>
<div class="t" style="left:511.7px;top:339.5px;font-size:4.9px;color:#4f535b;transform:translate(-50%,-50%)">đ366,000</div>
<svg class="abs" style="left:0;top:0" width="640" height="425"><circle cx="540.9" cy="338.45" r="1.75" fill="#e5534b"/></svg>
<div class="t" style="left:545px;top:339.5px;font-size:4.6px;color:#4f535b;transform:translateY(-50%)">-37 %</div>
<div class="t" style="left:559.8px;top:339.5px;font-size:4.8px;color:#e86058;transform:translateY(-50%)">| XẤU</div>

</body></html>
